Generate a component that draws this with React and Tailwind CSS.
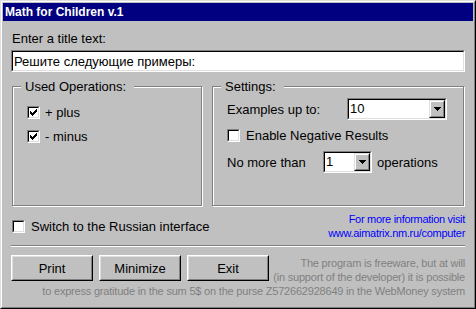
import React from "react";

function Checkbox({ checked }) {
  return (
    <span className="block w-[13px] h-[13px] shrink-0 border border-t-[#808080] border-l-[#808080] border-r-white border-b-white">
      <span className="block w-full h-full bg-white border border-t-black border-l-black border-r-[#dfdfdf] border-b-[#dfdfdf]">
        {checked && (
          <svg width="9" height="9" viewBox="0 0 9 9" shapeRendering="crispEdges" className="block">
            <path
              fill="#000"
              d="M7 1h1v1H7zM6 2h2v1H6zM1 3h1v1H1zM5 3h3v1H5zM1 4h2v1H1zM4 4h3v1H4zM1 5h5v1H1zM2 6h3v1H2zM3 7h1v1H3z"
            />
          </svg>
        )}
      </span>
    </span>
  );
}

function Combo({ value, className }) {
  return (
    <div className={className}>
      <div className="h-full border border-t-[#808080] border-l-[#808080] border-r-white border-b-white">
        <div className="h-full flex bg-white border border-t-black border-l-black border-r-[#dfdfdf] border-b-[#dfdfdf]">
          <span className="flex-1 pl-[1px] leading-[18px]">{value}</span>
          <span className="block w-[16px] h-full bg-[#c0c0c0] border border-t-[#dfdfdf] border-l-[#dfdfdf] border-r-black border-b-black">
            <span className="flex w-full h-full items-center justify-center border border-t-white border-l-white border-r-[#808080] border-b-[#808080]">
              <svg width="7" height="4" viewBox="0 0 7 4" shapeRendering="crispEdges" className="block">
                <path fill="#000" d="M0 0h7v1H0zM1 1h5v1H1zM2 2h3v1H2zM3 3h1v1H3z" />
              </svg>
            </span>
          </span>
        </div>
      </div>
    </div>
  );
}

function Button({ children }) {
  return (
    <div className="w-[82px] h-[26px] bg-[#c0c0c0] border border-t-white border-l-white border-r-black border-b-black">
      <div className="w-full h-full flex items-center justify-center border border-t-[#dfdfdf] border-l-[#dfdfdf] border-r-[#808080] border-b-[#808080]">
        {children}
      </div>
    </div>
  );
}

function Group({ title, className, children }) {
  return (
    <fieldset
      className={
        "border border-[#808080] shadow-[inset_1px_1px_0_#fff,1px_1px_0_#fff] " + className
      }
    >
      <legend className="ml-[8px] pl-[4px] pr-[8px] bg-[#c0c0c0] leading-[15px]">{title}</legend>
      {children}
    </fieldset>
  );
}

export default function App() {
  return (
    <div className="w-[476px] h-[309px] bg-[#c0c0c0] border border-t-[#dfdfdf] border-l-[#dfdfdf] border-r-black border-b-black font-['Liberation_Sans',Arial,sans-serif] text-[13px] leading-[15px] text-black select-none">
      <div className="h-full flex flex-col p-px border border-t-white border-l-white border-r-[#808080] border-b-[#808080]">
        <div className="h-[18px] shrink-0 bg-[#000080] pl-[2px] text-white font-bold text-[12px] leading-[18px]">
          Math for Children v.1
        </div>

        <div className="flex flex-col px-[8px]">
          <div className="mt-[10px] pl-px">Enter a title text:</div>

          <div className="mt-[4px] h-[22px] border border-t-[#808080] border-l-[#808080] border-r-white border-b-white">
            <div className="h-full bg-white flex items-center pl-[1px] border border-t-black border-l-black border-r-[#dfdfdf] border-b-[#dfdfdf] font-['Liberation_Sans','Noto_Sans',Arial,sans-serif]">
              Решите следующие примеры:
            </div>
          </div>

          <div className="mt-[7px] flex gap-[10px] pl-px">
            <Group title="Used Operations:" className="w-[190px] h-[127px]">
              <div className="flex flex-col gap-[7px] pt-[10px] pl-[14px]">
                <div className="h-[17px] flex items-center gap-[5px]">
                  <Checkbox checked />
                  <span>+ plus</span>
                </div>
                <div className="h-[17px] flex items-center gap-[5px]">
                  <Checkbox checked />
                  <span>- minus</span>
                </div>
              </div>
            </Group>

            <Group title="Settings:" className="w-[252px] h-[127px]">
              <div className="flex flex-col gap-[7px] pt-[4px] pl-[14px]">
                <div className="flex items-center h-[22px]">
                  <span className="w-[120px]">Examples up to:</span>
                  <Combo value="10" className="w-[100px] h-[22px]" />
                </div>
                <div className="h-[17px] flex items-center gap-[6px]">
                  <Checkbox />
                  <span>Enable Negative Results</span>
                </div>
                <div className="flex items-center h-[22px]">
                  <span className="w-[96px]">No more than</span>
                  <Combo value="1" className="w-[49px] h-[22px]" />
                  <span className="ml-[5px]">operations</span>
                </div>
              </div>
            </Group>
          </div>

          <div className="flex justify-between items-start">
            <div className="mt-[12px] h-[17px] flex items-center gap-[6px] pl-px">
              <Checkbox />
              <span>Switch to the Russian interface</span>
            </div>
            <div className="mt-[6px] text-right text-[11px] leading-[14px] tracking-[-0.3px] whitespace-nowrap text-[#0000ff]">
              <div>For more information visit</div>
              <div>www.aimatrix.nm.ru/computer</div>
            </div>
          </div>

          <div className="mt-[5px] h-[2px] border-t border-t-[#808080] border-b border-b-white" />

          <div className="mt-[8px] flex justify-between items-start">
            <div className="flex gap-[6px] shrink-0">
              <Button>Print</Button>
              <Button>Minimize</Button>
              <Button>Exit</Button>
            </div>
            <div className="mt-[1px] text-right text-[11px] leading-[14px] tracking-[-0.2px] whitespace-nowrap text-[#808080]">
              <div>The program is freeware, but at will</div>
              <div>(in support of the developer) it is possible</div>
            </div>
          </div>
          <div className="text-right text-[11px] leading-[14px] tracking-[-0.2px] text-[#808080] whitespace-nowrap">
            to express gratitude in the sum 5$ on the purse Z572662928649 in the WebMoney system
          </div>
        </div>
      </div>
    </div>
  );
}
